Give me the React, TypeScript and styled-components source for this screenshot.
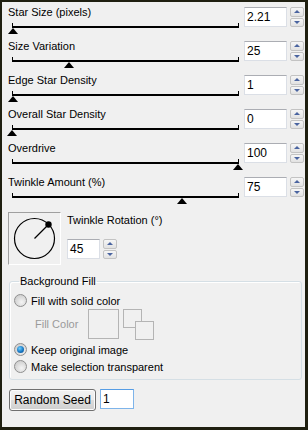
import React from "react";
import styled, { createGlobalStyle } from "styled-components";

const GlobalStyle = createGlobalStyle`
  body {
    margin: 0;
    background: #f0f0f0;
    font-family: "Liberation Sans", Arial, sans-serif;
    font-size: 11px;
    color: #000;
  }
`;

const Frame = styled.div`
  width: 308px;
  height: 430px;
  box-sizing: border-box;
  border-style: solid;
  border-color: #1f1f10;
  border-width: 2px 3px 3px 2px;
  background: #f0f0f0;
  padding: 4px 1px 0 6px;
  display: flex;
  flex-direction: column;
`;

const Row = styled.div`
  height: 34px;
  display: grid;
  grid-template-columns: 1fr auto;
`;

const Left = styled.div`
  display: flex;
  flex-direction: column;
`;

const Label = styled.div<{ $muted?: boolean }>`
  height: 13px;
  line-height: 13px;
  white-space: nowrap;
  color: ${(p) => (p.$muted ? "#9a9a9a" : "#000")};
`;

const Track = styled.div`
  position: relative;
  margin: 7px 0 0 4px;
  width: 227px;
  height: 10px;
  border-top: 2px solid #000;
  box-sizing: border-box;
  &::before,
  &::after {
    content: "";
    position: absolute;
    top: -5px;
    width: 1px;
    height: 4px;
    background: #000;
  }
  &::before {
    left: 0;
  }
  &::after {
    right: 0;
  }
`;

const Thumb = styled.div`
  position: absolute;
  top: 0;
  width: 0;
  height: 0;
  margin-left: -5px;
  border-left: 5.5px solid transparent;
  border-right: 5.5px solid transparent;
  border-bottom: 6px solid #000;
`;

const Field = styled.div`
  display: flex;
  gap: 3px;
  margin-top: 1px;
`;

const NumberBox = styled.div<{ $w: number; $focus?: boolean }>`
  width: ${(p) => p.$w}px;
  height: 20px;
  box-sizing: border-box;
  background: #fff;
  border: 1px solid ${(p) => (p.$focus ? "#7eb4ea" : "#dbdfe6")};
  border-top-color: ${(p) => (p.$focus ? "#569de5" : "#abadb3")};
  padding: 0 0 0 2px;
  font-size: 12px;
  line-height: 18px;
`;

const Spin = styled.div`
  width: 14px;
  height: 20px;
  display: flex;
  flex-direction: column;
  gap: 1px;
`;

const SpinButton = styled.div`
  flex: 1;
  box-sizing: border-box;
  border: 1px solid #c3c3c3;
  border-radius: 2px;
  background: linear-gradient(#f6f6f6, #e2e2e2);
  display: flex;
  align-items: center;
  justify-content: center;
`;

const Arrow = styled.div<{ $down?: boolean }>`
  width: 0;
  height: 0;
  border-left: 3.5px solid transparent;
  border-right: 3.5px solid transparent;
  ${(p) =>
    p.$down ? "border-top: 3px solid #4a64a0;" : "border-bottom: 3px solid #4a64a0;"}
`;

const Spinner = () => (
  <Spin>
    <SpinButton>
      <Arrow />
    </SpinButton>
    <SpinButton>
      <Arrow $down />
    </SpinButton>
  </Spin>
);

const RotationRow = styled.div`
  display: flex;
  margin-top: 2px;
  gap: 6px;
`;

const Dial = styled.div`
  width: 53px;
  height: 53px;
  box-sizing: border-box;
  border: 1px solid;
  border-color: #a0a0a0 #ffffff #ffffff #a0a0a0;
  display: flex;
`;

const RotationControls = styled.div`
  display: flex;
  flex-direction: column;
  padding-top: 2px;
  gap: 11px;
`;

const Group = styled.fieldset`
  margin: 10px 2px 0 1px;
  padding: 4px 0 4px 4px;
  border: 1px solid #d5dfe5;
  border-radius: 3px;
  box-shadow: inset 1px 1px 0 #fff;
  display: flex;
  flex-direction: column;
`;

const Legend = styled.legend`
  padding: 0 1px;
  margin-left: 5px;
  line-height: 13px;
`;

const RadioRow = styled.label<{ $mt?: number }>`
  height: 17px;
  display: flex;
  align-items: center;
  gap: 4px;
  white-space: nowrap;
  margin-top: ${(p) => p.$mt ?? 0}px;
`;

const Radio = styled.span<{ $checked?: boolean }>`
  width: 13px;
  height: 13px;
  box-sizing: border-box;
  border-radius: 50%;
  border: 1px solid #8f8f8f;
  background: radial-gradient(circle at 60% 65%, #f4f4f4, #d2d2d2 70%);
  display: flex;
  align-items: center;
  justify-content: center;
  &::after {
    content: "";
    display: ${(p) => (p.$checked ? "block" : "none")};
    width: 7px;
    height: 7px;
    border-radius: 50%;
    background: radial-gradient(circle at 40% 35%, #6fd0ff, #1878c4 55%, #0c4a86);
  }
`;

const FillColorRow = styled.div`
  display: flex;
  align-items: center;
  padding-left: 21px;
  height: 30px;
`;

const Swatch = styled.div`
  width: 31px;
  height: 30px;
  box-sizing: border-box;
  border: 1px solid #b4b4b4;
  margin-left: 10px;
`;

const SwatchPair = styled.div`
  display: grid;
  grid-template-columns: 12px 7px 12px;
  grid-template-rows: 12px 7px 12px;
  margin-left: 4px;
`;

const SmallSwatch = styled.div<{ $pos: string }>`
  grid-area: ${(p) => p.$pos};
  box-sizing: border-box;
  border: 1px solid #b4b4b4;
  background: #f0f0f0;
`;

const BottomRow = styled.div`
  display: flex;
  gap: 4px;
  margin: 9px 0 0 1px;
  align-items: flex-start;
`;

const Button = styled.button`
  width: 87px;
  height: 22px;
  box-sizing: border-box;
  border: 1px solid #707070;
  border-radius: 3px;
  background: linear-gradient(#f2f2f2 0%, #ebebeb 50%, #dddddd 51%, #cfcfcf 100%);
  box-shadow: inset 0 0 0 1px #fcfcfc;
  font-family: inherit;
  font-size: 12px;
  padding: 0;
  color: #000;
`;

const sliders = [
  { label: "Star Size (pixels)", value: "2.21", pos: 0.004 },
  { label: "Size Variation", value: "25", pos: 0.25 },
  { label: "Edge Star Density", value: "1", pos: 0.005 },
  { label: "Overall Star Density", value: "0", pos: 0 },
  { label: "Overdrive", value: "100", pos: 1 },
  { label: "Twinkle Amount (%)", value: "75", pos: 0.75 },
];

export default function App() {
  return (
    <>
      <GlobalStyle />
      <Frame>
        {sliders.map((s) => (
          <Row key={s.label}>
            <Left>
              <Label>{s.label}</Label>
              <Track>
                <Thumb style={{ left: `${s.pos * 226}px` }} />
              </Track>
            </Left>
            <Field>
              <NumberBox $w={43}>{s.value}</NumberBox>
              <Spinner />
            </Field>
          </Row>
        ))}

        <RotationRow>
          <Dial>
            <svg width="51" height="51" viewBox="0 0 51 51">
              <circle cx="25.5" cy="25.5" r="20" fill="none" stroke="#000" strokeWidth="1.2" />
              <line x1="25.5" y1="25.5" x2="39.5" y2="11.5" stroke="#000" strokeWidth="1.2" />
              <circle cx="39.5" cy="11.5" r="3.2" fill="#000" />
            </svg>
          </Dial>
          <RotationControls>
            <Label>Twinkle Rotation (°)</Label>
            <Field>
              <NumberBox $w={33}>45</NumberBox>
              <Spinner />
            </Field>
          </RotationControls>
        </RotationRow>

        <Group>
          <Legend>Background Fill</Legend>
          <RadioRow>
            <Radio />
            Fill with solid color
          </RadioRow>
          <FillColorRow>
            <Label $muted>Fill Color</Label>
            <Swatch />
            <SwatchPair>
              <SmallSwatch $pos="1 / 1 / 3 / 3" />
              <SmallSwatch $pos="2 / 2 / 4 / 4" />
            </SwatchPair>
          </FillColorRow>
          <RadioRow $mt={2}>
            <Radio $checked />
            Keep original image
          </RadioRow>
          <RadioRow>
            <Radio />
            Make selection transparent
          </RadioRow>
        </Group>

        <BottomRow>
          <Button>Random Seed</Button>
          <NumberBox $w={34} $focus>
            1
          </NumberBox>
        </BottomRow>
      </Frame>
    </>
  );
}
